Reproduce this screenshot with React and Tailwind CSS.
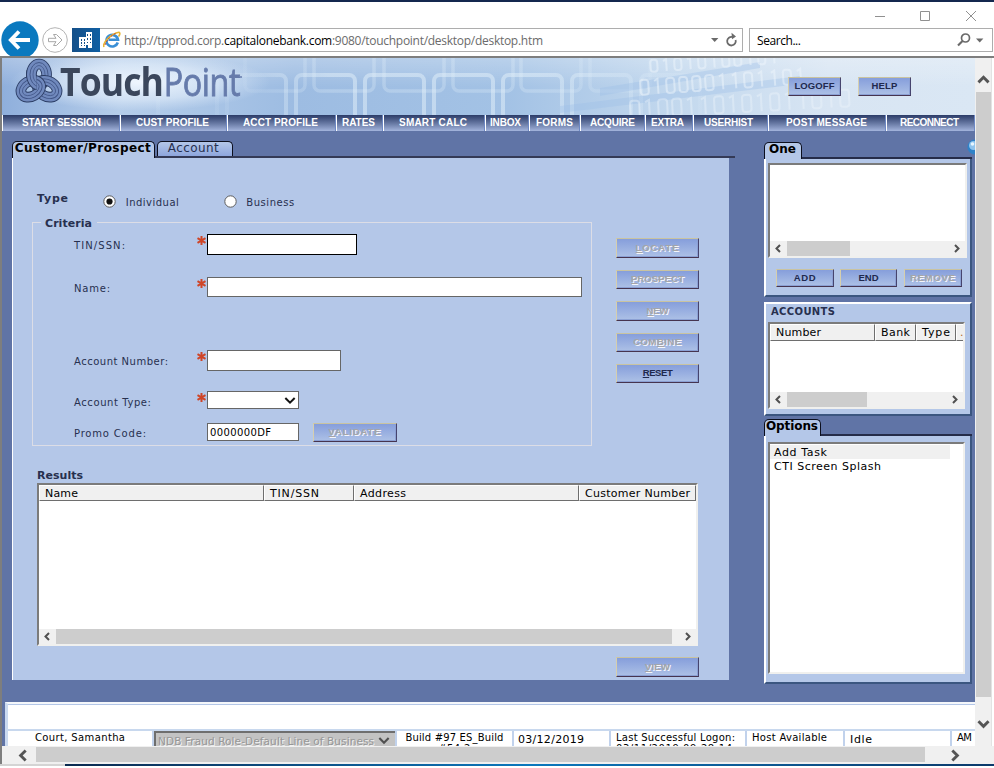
import React, { useLayoutEffect, useRef, useState } from "react";

const VERDANA = "font-['DejaVu_Sans',Verdana,sans-serif]";
const ARIAL = "font-['Liberation_Sans',Arial,sans-serif]";
const SEGOE = "font-['Open_Sans','Noto_Sans',sans-serif]";

// Single line of text whose tracking is adjusted to fill a given width.
function Fit({ w, className = "", children }) {
  const ref = useRef(null);
  const [spacing, setSpacing] = useState(0);
  useLayoutEffect(() => {
    const el = ref.current;
    el.style.letterSpacing = "0px";
    const natural = el.getBoundingClientRect().width;
    const next = (w - natural) / Math.max(1, el.textContent.length - 1);
    el.style.letterSpacing = next + "px";
    setSpacing(next);
  }, [w]);
  return (
    <span
      ref={ref}
      style={{ letterSpacing: spacing }}
      className={"inline-block shrink-0 whitespace-pre " + className}
    >
      {children}
    </span>
  );
}

// Text condensed horizontally to a given width, for the word mark.
function Condensed({ w, className = "", children }) {
  const ref = useRef(null);
  const [box, setBox] = useState({ scale: 1, margin: 0 });
  useLayoutEffect(() => {
    const natural = ref.current.offsetWidth;
    setBox({ scale: w / natural, margin: w - natural });
  }, [w]);
  return (
    <span
      ref={ref}
      style={{ transform: `scaleX(${box.scale})`, marginRight: box.margin }}
      className={"inline-block shrink-0 origin-left whitespace-pre " + className}
    >
      {children}
    </span>
  );
}

function Chevron({ dir, className = "", color = "#505050", size = 9, sw = 2 }) {
  const d = {
    left: "M6 1 L2.5 4.5 L6 8",
    right: "M3 1 L6.5 4.5 L3 8",
    up: "M1 6.5 L4.5 3 L8 6.5",
    down: "M1 3 L4.5 6.5 L8 3",
  }[dir];
  return (
    <svg width={size} height={size} viewBox="0 0 9 9" className={"block shrink-0 " + className}>
      <path d={d} fill="none" stroke={color} strokeWidth={sw} />
    </svg>
  );
}

function Key({ label, hot, w, disabled, className, tone = "text-[#20294e]" }) {
  const i = hot === undefined ? -1 : hot;
  return (
    <button
      className={
        "flex shrink-0 items-center justify-center border border-t-[#c9c3a0] border-l-[#d6cfae] border-r-[#46446e] border-b-[#46344f] bg-linear-to-b from-[#869edb] to-[#adc1e6] shadow-[inset_-1px_-1px_0_#8ba0d4] " +
        ARIAL +
        " pb-px text-[9.5px] leading-none font-bold " +
        (disabled ? "text-[#a5a5a8] [text-shadow:1px_1px_0_#f4f6fb] " : tone + " ") +
        className
      }
    >
      <Fit w={w}>
        {i < 0 ? (
          label
        ) : (
          <>
            {label.slice(0, i)}
            <u className="underline-offset-1">{label[i]}</u>
            {label.slice(i + 1)}
          </>
        )}
      </Fit>
    </button>
  );
}

function HScroll({ thumb }) {
  return (
    <div className="flex h-[15px] w-full shrink-0 items-center bg-[#f0f0f0]">
      <div className="flex w-[17px] justify-center">
        <Chevron dir="left" />
      </div>
      <div className={"h-[15px] bg-[#cdcdcd] " + thumb} />
      <div className="flex-1" />
      <div className="flex w-[17px] justify-center">
        <Chevron dir="right" />
      </div>
    </div>
  );
}

function Loop() {
  return (
    <>
      <ellipse cx="24" cy="16.5" rx="7.6" ry="10.5" stroke="#2b3c63" strokeWidth="10.6" />
      <ellipse cx="24" cy="16.5" rx="7.6" ry="10.5" stroke="#7089bd" strokeWidth="8.8" />
      <ellipse cx="24" cy="16.5" rx="9" ry="12" stroke="#3f5385" strokeWidth="0.9" />
      <ellipse cx="24" cy="16.5" rx="6" ry="9" stroke="#3f5385" strokeWidth="0.7" />
    </>
  );
}

function Knot() {
  return (
    <svg width="48" height="46" viewBox="0 0 48 46" className="block shrink-0" fill="none">
      <defs>
        <clipPath id="leftHalf">
          <rect x="0" y="12" width="21.5" height="26" />
        </clipPath>
      </defs>
      {[0, 120, 240].map((a) => (
        <g key={a} transform={`rotate(${a} 24 26)`}>
          <Loop />
        </g>
      ))}
      <g clipPath="url(#leftHalf)">
        <Loop />
      </g>
    </svg>
  );
}

// Rows of faint ones and zeros drifting across the right of the banner.
const BITS = [
  { x: 650, y: 60, w: 8, h: 12, o: 0.5, r: -4, bits: "01010100101" },
  { x: 640, y: 80, w: 9, h: 15, o: 0.5, r: -4, bits: "0100001101101" },
  { x: 630, y: 101, w: 10, h: 17, o: 0.4, r: -3, bits: "0100110101011010" },
];

function BannerArt() {
  const lower = [156, 225, 294, 363, 432, 501, 570, 639];
  const upper = [245, 314, 384, 453, 521, 590];
  return (
    <svg width="973" height="57" viewBox="2 58 973 57" className="absolute inset-0">
      <defs>
        <linearGradient id="base" x1="0" x2="1">
          <stop offset="0" stopColor="#8fafdc" />
          <stop offset="0.12" stopColor="#b5cdea" />
          <stop offset="0.3" stopColor="#9dbce2" />
          <stop offset="0.52" stopColor="#a3c2e5" />
          <stop offset="0.7" stopColor="#c4d9ee" />
          <stop offset="0.85" stopColor="#d8e5f3" />
          <stop offset="1" stopColor="#dae7f4" />
        </linearGradient>
        <linearGradient id="shine" x1="0" x2="0" y1="0" y2="1">
          <stop offset="0" stopColor="#fff" stopOpacity="0.25" />
          <stop offset="0.5" stopColor="#fff" stopOpacity="0" />
        </linearGradient>
        <radialGradient id="glow">
          <stop offset="0" stopColor="#f2f8ff" stopOpacity="0.95" />
          <stop offset="0.6" stopColor="#e4effb" stopOpacity="0.6" />
          <stop offset="1" stopColor="#dbe8f8" stopOpacity="0" />
        </radialGradient>
        <linearGradient id="fade" gradientUnits="userSpaceOnUse" x1="225" x2="740" y1="0" y2="0">
          <stop offset="0" stopColor="#e4f1fa" stopOpacity="0.1" />
          <stop offset="0.2" stopColor="#e4f1fa" stopOpacity="0.5" />
          <stop offset="0.6" stopColor="#e4f1fa" stopOpacity="0.5" />
          <stop offset="1" stopColor="#e4f1fa" stopOpacity="0" />
        </linearGradient>
      </defs>
      <rect x="2" y="58" width="973" height="57" fill="url(#base)" />
      <rect x="2" y="58" width="973" height="57" fill="url(#shine)" />
      <ellipse cx="140" cy="82" rx="130" ry="29" fill="url(#glow)" />
      <g fill="none" stroke="url(#fade)">
        {upper.map((x) => (
          <rect key={x} x={x} y="40" width="60" height="51" rx="6" strokeWidth="3.5" opacity="0.55" />
        ))}
        {lower.map((x) => (
          <rect key={x} x={x + 2} y="75" width="59" height="60" rx="6" strokeWidth="4" />
        ))}
      </g>
      <g fill="#9dbfe8" opacity="0.35">
        <path d="M600 88 L760 62 L760 68 L600 96 Z" />
        <path d="M560 106 L800 76 L800 84 L560 113 Z" />
      </g>
      {BITS.map((row) => (
        <g
          key={row.y}
          transform={`rotate(${row.r} ${row.x} ${row.y})`}
          fill="none"
          stroke="#eff6fc"
          strokeWidth="2"
          opacity={row.o}
        >
          {row.bits.split("").map((bit, i) => {
            const x = row.x + i * (row.w + 4);
            return bit === "0" ? (
              <rect key={i} x={x} y={row.y} width={row.w - 1} height={row.h} rx="3" />
            ) : (
              <path key={i} d={`M${x + 1} ${row.y + 2} L${x + row.w / 2} ${row.y} V${row.y + row.h}`} />
            );
          })}
        </g>
      ))}
    </svg>
  );
}

const NAV = [
  ["START SESSION", "w-[118px] pl-[19px]", 79],
  ["CUST PROFILE", "w-[107px] pl-[15px]", 73],
  ["ACCT PROFILE", "w-[109px] pl-[15px]", 75],
  ["RATES", "w-[47px] pl-[5px]", 33],
  ["SMART CALC", "w-[102px] pl-[15px]", 68],
  ["INBOX", "w-[44px] pl-[4px]", 31],
  ["FORMS", "w-[51px] pl-[6px]", 37],
  ["ACQUIRE", "w-[65px] pl-[9px]", 45],
  ["EXTRA", "w-[48px] pl-[5px]", 33],
  ["USERHIST", "w-[75px] pl-[10px]", 49],
  ["POST MESSAGE", "w-[118px] pl-[17px]", 81],
  ["RECONNECT", "w-[89px] pl-[13px]", 59],
];

function Nav() {
  return (
    <div className="flex h-4 shrink-0 bg-linear-to-b from-[#2c3c68] to-[#a3b4dc]">
      {NAV.map(([label, cls, w]) => (
        <div
          key={label}
          className={
            "flex shrink-0 items-center border-l border-l-white border-r border-r-[#6d88c4] pb-px text-[10px] leading-none font-bold text-white " +
            ARIAL + " " + cls
          }
        >
          <Fit w={w}>{label}</Fit>
        </div>
      ))}
    </div>
  );
}

function Chrome() {
  return (
    <div className="flex h-[54px] shrink-0 flex-col bg-white">
      <div className="flex h-[26px] shrink-0 items-start justify-end pr-[17px]">
        <svg width="102" height="26" viewBox="0 0 102 26" className="block" fill="none" stroke="#909090">
          <path d="M0 14.5 H10 M45.5 9.5 H54.5 V18.5 H45.5 Z" />
          <path d="M91 9 L101 19 M101 9 L91 19" />
        </svg>
      </div>
      <div className="flex h-6 shrink-0 items-center">
        <div className="relative h-6 w-[72px] shrink-0">
          <svg width="72" height="36" viewBox="0 20 72 36" className="absolute -top-2 left-0">
            <circle cx="20" cy="40" r="18.7" fill="#0a79bf" />
            <path d="M30 40 H12 M19 31.5 L10.8 40 L19 48.5" fill="none" stroke="#fff" strokeWidth="3.8" />
            <circle cx="55" cy="40" r="12.3" fill="#fff" stroke="#b4b4b4" />
            <path d="M48.5 38.3 H56 L53.5 34.5 H56.5 L62 40 L56.5 45.5 H53.5 L56 41.7 H48.5 Z" fill="none" stroke="#a8a8a8" />
          </svg>
        </div>
        <div className="flex h-6 w-[671px] shrink-0 items-center border-y border-r border-[#adadad]">
          <div className="-my-px flex h-6 w-7 shrink-0 items-center justify-center bg-linear-to-r from-[#155089] to-[#0f5fa3]">
            <svg width="14" height="16" viewBox="0 0 14 16" fill="#fff" shapeRendering="crispEdges">
              <path d="M7 0 H13 V16 H9 V13 H7 V16 H0 V5 H7 Z" />
              <path d="M8 2h1v2H8zM11 2h1v2h-1zM8 6h1v2H8zM11 6h1v2h-1zM2 7h1v2H2zM5 7h1v2H5zM2 10h1v2H2zM5 10h1v2H5zM8 10h1v1H8zM11 10h1v1h-1zM2 13h1v1H2zM5 13h1v1H5z" fill="#155089" />
            </svg>
          </div>
          <svg width="18" height="18" viewBox="0 0 18 18" className="ml-[3px] shrink-0">
            <path d="M14.8 11.5 A5.8 5.8 0 1 1 15 8.8 H5.5" fill="none" stroke="#3a8fd6" strokeWidth="2.6" />
            <path d="M1 16 C-1 12 8 2.5 16 1.2 C17.6 1.8 16.5 4.5 15.5 5.5" fill="none" stroke="#e8b532" strokeWidth="1.6" />
            <path d="M2 14 C3 10 8 4 13.5 2" fill="none" stroke="#c23b2a" strokeWidth="0.9" strokeDasharray="2 1.5" />
          </svg>
          <Fit w={419} className={"ml-[3px] pt-px text-[12px] leading-none text-[#6b6b6b] " + SEGOE}>
            http://tpprod.corp.<span className="text-black">capitalonebank.com</span>:9080/touchpoint/desktop/desktop.htm
          </Fit>
          <div className="flex-1" />
          <svg width="28" height="16" viewBox="0 0 28 16" className="mr-[4px] shrink-0">
            <path d="M1 6 H8.4 L4.7 10 Z" fill="#6a6a6a" />
            <path d="M25.6 7 A4.3 4.3 0 1 1 22.5 4" fill="none" stroke="#6a6a6a" strokeWidth="1.8" transform="translate(0 1)" />
            <path d="M21.5 0.8 L26 4.5 L22 7.3 Z" fill="#6a6a6a" />
          </svg>
        </div>
        <div className="ml-[6px] flex h-6 w-[244px] shrink-0 items-center border border-[#adadad]">
          <Fit w={44} className={"ml-[7px] pt-px text-[12px] leading-none text-black " + SEGOE}>Search...</Fit>
          <div className="flex-1" />
          <svg width="27" height="14" viewBox="0 0 27 14" className="mr-2 shrink-0">
            <circle cx="8.5" cy="5" r="4" fill="none" stroke="#6a6a6a" strokeWidth="1.7" />
            <path d="M5.5 8 L1 12.5" stroke="#6a6a6a" strokeWidth="2.2" />
            <path d="M19 5.5 H26.4 L22.7 9.5 Z" fill="#6a6a6a" />
          </svg>
        </div>
      </div>
    </div>
  );
}

function Row({ label, w, star, children, drop = "pt-[2px]", className }) {
  return (
    <div className={"flex shrink-0 items-center " + className}>
      <div className={"w-[123px] shrink-0 text-[10px] leading-none text-[#27304f] " + drop + " " + VERDANA}>
        <Fit w={w}>{label}</Fit>
      </div>
      <div className="flex w-[10px] shrink-0 justify-start self-start pt-[2px]">
        {star && (
          <svg width="9" height="9" viewBox="0 0 9 9">
            <path d="M4.5 0 V9 M0.5 2.2 L8.5 6.8 M8.5 2.2 L0.5 6.8" stroke="#cf4527" strokeWidth="2" />
          </svg>
        )}
      </div>
      {children}
    </div>
  );
}

function HeadCell({ children, w, className, pad = "pl-[5px]" }) {
  return (
    <div
      className={
        "flex shrink-0 items-center overflow-hidden border-t border-l border-r border-b border-t-white border-l-white border-r-[#6e6e6e] border-b-[#6e6e6e] bg-[#f0f0f0] text-[11px] leading-none text-black " +
        VERDANA + " " + pad + " " + className
      }
    >
      <Fit w={w}>{children}</Fit>
    </div>
  );
}

const SUNKEN = "border-2 border-t-[#7b7b7b] border-l-[#7b7b7b] border-r-[#f0f0ee] border-b-[#f0f0ee] bg-white";
const RAISED = "border-l-2 border-r-2 border-b-2 border-t-white border-l-white border-r-[#3b5680] border-b-[#3b5680] bg-[#b4c7e8]";

function MainPanel() {
  return (
    <div className="flex w-[723px] shrink-0 flex-col pt-[10px]">
      <div className="flex h-[17px] shrink-0">
        <div className={"flex w-[143px] shrink-0 justify-center rounded-t-[5px] border border-b-0 border-[#0c0f1e] bg-[#b4c7e8] pr-px text-[12px] leading-[13px] font-bold text-black " + VERDANA}>
          <Fit w={136}>Customer/Prospect</Fit>
        </div>
        <div className="flex flex-1 items-end border-b-2 border-[#343a56] pl-[2px]">
          <div className={"flex h-[15px] w-[76px] justify-center rounded-t-[5px] border border-b-0 border-[#0c0f1e] bg-linear-to-b from-[#b4c7e8] to-[#8ea6dd] pr-[3px] text-[12px] leading-[13px] text-[#27304f] " + VERDANA}>
            <Fit w={51}>Account</Fit>
          </div>
        </div>
      </div>
      <div className="flex h-[522px] w-[717px] shrink-0 flex-col border-l border-white bg-[#b4c7e8]">
        <div className={"flex h-16 shrink-0 items-start pl-6 text-[#27304f] " + VERDANA}>
          <Fit w={31} className="mt-[35px] text-[11px] leading-none font-bold">Type</Fit>
          <svg width="13" height="13" viewBox="0 0 13 13" className="mt-[37px] ml-[34px] shrink-0">
            <circle cx="6.5" cy="6.5" r="5.7" fill="#fff" stroke="#5c5c5c" />
            <circle cx="6.5" cy="6.5" r="3.1" fill="#111" />
          </svg>
          <Fit w={53} className="mt-[40px] ml-[10px] text-[10px] leading-none">Individual</Fit>
          <svg width="13" height="13" viewBox="0 0 13 13" className="mt-[37px] ml-[45px] shrink-0">
            <circle cx="6.5" cy="6.5" r="5.7" fill="#fff" stroke="#5c5c5c" />
          </svg>
          <Fit w={48} className="mt-[40px] ml-[9px] text-[10px] leading-none">Business</Fit>
        </div>
        <div className="flex h-[245px] shrink-0 pl-[19px]">
          <div className="flex h-[224px] w-[560px] shrink-0 flex-col border border-[#dcdde6] pl-[41px]">
            <div className={"-mt-[6px] -ml-[33px] h-[12px] w-[56px] shrink-0 bg-[#b4c7e8] pl-1 text-[11px] leading-[13px] font-bold text-[#27304f] " + VERDANA}>
              <Fit w={47}>Criteria</Fit>
            </div>
            <Row label="TIN/SSN:" w={51} star className="mt-[5px] h-[21px]">
              <div className="h-[21px] w-[150px] border border-black bg-white" />
            </Row>
            <Row label="Name:" w={36} star drop="pt-1" className="mt-[22px] h-5">
              <div className="h-5 w-[375px] border border-[#666] bg-white" />
            </Row>
            <Row label="Account Number:" w={94} star className="mt-[53px] h-[21px]">
              <div className="h-[21px] w-[134px] border border-[#666] bg-white" />
            </Row>
            <Row label="Account Type:" w={77} star drop="pt-[6px]" className="mt-5 h-[18px]">
              <div className="flex h-[18px] w-[92px] items-center justify-end border border-[#666] bg-white pr-[2px] pb-px">
                <Chevron dir="down" size={12} color="#111" sw={1.5} />
              </div>
            </Row>
            <Row label="Promo Code:" w={72} drop="pt-[4px]" className="mt-[14px] h-[18px]">
              <div className={"flex h-[18px] w-[92px] items-center border border-[#666] bg-white pt-[2px] pl-[2px] text-[10px] leading-none text-black " + VERDANA}>
                <Fit w={61}>0000000DF</Fit>
              </div>
              <Key label="VALIDATE" hot={0} w={52} disabled className="ml-[14px] h-[19px] w-[84px]" />
            </Row>
          </div>
          <div className="flex flex-col pt-4 pl-[24px]">
            <Key label="LOCATE" hot={0} w={43} disabled className="h-5 w-[83px]" />
            <Key label="PROSPECT" hot={0} w={53} disabled className="mt-3 h-[19px] w-[83px]" />
            <Key label="NEW" hot={0} w={22} disabled className="mt-3 h-5 w-[83px]" />
            <Key label="COMBINE" hot={3} w={48} disabled className="mt-3 h-[19px] w-[83px]" />
            <Key label="RESET" hot={0} w={30} className="mt-3 h-[19px] w-[83px]" />
          </div>
        </div>
        <div className="flex h-[213px] shrink-0 flex-col pl-6">
          <div className={"h-4 shrink-0 pt-[3px] text-[11px] leading-none font-bold text-[#27304f] " + VERDANA}>
            <Fit w={46}>Results</Fit>
          </div>
          <div className={"flex h-[163px] w-[661px] shrink-0 flex-col " + SUNKEN}>
            <div className="flex h-[16px] shrink-0">
              <HeadCell w={33} className="w-[225px]">Name</HeadCell>
              <HeadCell w={49} className="w-[90px]">TIN/SSN</HeadCell>
              <HeadCell w={46} className="w-[225px]">Address</HeadCell>
              <HeadCell w={105} className="w-[117px]">Customer Number</HeadCell>
            </div>
            <div className="flex-1" />
            <HScroll thumb="w-[616px]" />
          </div>
          <div className="pt-[11px] pl-[579px]">
            <Key label="VIEW" hot={0} w={25} disabled className="h-5 w-[83px]" />
          </div>
        </div>
      </div>
    </div>
  );
}

function SideTab({ label, w, className }) {
  return (
    <div className="flex h-[17px] shrink-0">
      <div className={"flex shrink-0 rounded-t-[5px] border border-b-0 border-[#0c0f1e] bg-[#b4c7e8] text-[12px] leading-[13px] font-bold text-black " + VERDANA + " " + className}>
        <Fit w={w}>{label}</Fit>
      </div>
      <div className="flex-1 border-b-2 border-[#252c49]" />
    </div>
  );
}

function Side() {
  return (
    <div className="flex w-[208px] shrink-0 flex-col pt-[11px]">
      <SideTab label="One" w={27} className="w-[38px] pl-1" />
      <div className={"flex h-[138px] shrink-0 flex-col pt-1 pl-[2px] " + RAISED}>
        <div className={"flex h-[95px] w-[199px] shrink-0 flex-col " + SUNKEN}>
          <div className="flex-1" />
          <HScroll thumb="w-[63px]" />
        </div>
        <div className="flex pt-[11px] pl-2">
          <Key label="ADD" w={22} className="h-[18px] w-[58px]" />
          <Key label="END" w={20} className="ml-[6px] h-[18px] w-[57px]" />
          <Key label="REMOVE" w={45} disabled className="ml-[7px] h-[18px] w-[58px]" />
        </div>
      </div>
      <div className={"mt-[5px] flex h-[114px] shrink-0 flex-col border-t-2 pl-[2px] " + RAISED}>
        <div className={"h-[18px] shrink-0 pt-[3px] pl-[3px] text-[10px] leading-none font-bold text-[#27304f] " + VERDANA}>
          <Fit w={64}>ACCOUNTS</Fit>
        </div>
        <div className={"flex h-[87px] w-[197px] shrink-0 flex-col " + SUNKEN}>
          <div className="flex h-[17px] shrink-0 overflow-hidden">
            <HeadCell w={45} className="w-[105px]">Number</HeadCell>
            <HeadCell w={29} className="w-[41px]">Bank</HeadCell>
            <HeadCell w={28} className="w-[40px]">Type</HeadCell>
            <HeadCell w={4} pad="pl-[3px]" className="w-[12px] text-[#b06a30]!">.</HeadCell>
          </div>
          <div className="flex-1" />
          <HScroll thumb="w-[80px]" />
        </div>
      </div>
      <div className="h-[3px] shrink-0" />
      <SideTab label="Options" w={52} className="w-[57px] pl-px" />
      <div className={"flex h-[248px] shrink-0 flex-col pt-[6px] pl-[2px] " + RAISED}>
        <div className={"flex h-[232px] w-[197px] shrink-0 flex-col pt-[2px] text-[11px] leading-[14px] text-black " + SUNKEN + " " + VERDANA}>
          <div className="-mt-px h-[14px] w-[180px] shrink-0 bg-[#f0f0f0] pt-px pl-1">
            <Fit w={53}>Add Task</Fit>
          </div>
          <div className="h-[14px] shrink-0 pt-px pl-1">
            <Fit w={107}>CTI Screen Splash</Fit>
          </div>
        </div>
      </div>
    </div>
  );
}

function StatusBar() {
  const cell = "flex shrink-0 border-r-2 border-[#c1d2ec] text-[10px] leading-[13px] text-black overflow-hidden ";
  return (
    <div className={"flex h-[44px] shrink-0 flex-col bg-[#6074a6] pl-[3px] " + VERDANA}>
      <div className="flex flex-1 flex-col border-t-2 border-l-[3px] border-t-[#f4f7fb] border-l-[#cbdaf0] bg-white">
        <div className="h-[27px] shrink-0 border-t border-b-2 border-t-[#b4c7e8] border-b-[#c8d8ee]" />
        <div className="flex h-[15px] overflow-hidden">
          <div className={cell + "w-[146px] pl-[27px]"}>
            <Fit w={90}>Court, Samantha</Fit>
          </div>
          <div className="flex w-[241px] shrink-0 items-start border-t-2 border-l-2 border-[#6e6e6e] bg-[#c3c3c3]">
            <Fit w={218} className="pl-[2px] text-[10.5px] leading-[17px] text-[#979797] [text-shadow:1px_1px_0_#f2f2f2]">
              NDB Fraud Role-Default Line of Business
            </Fit>
            <Chevron dir="down" size={12} className="mt-[1px] ml-[4px]" sw={1.6} />
          </div>
          <div className={cell + "w-[119px] flex-col items-center border-l-2"}>
            <Fit w={98}>Build #97 ES_Build</Fit>
            <Fit w={32} className="leading-[10px]">#54.2</Fit>
          </div>
          <div className={cell + "w-[97px] pl-[4px] text-[11px]! leading-[18px]!"}>
            <Fit w={66}>03/12/2019</Fit>
          </div>
          <div className={cell + "w-[136px] flex-col pl-[5px]"}>
            <Fit w={119} className="self-start">Last Successful Logon:</Fit>
            <Fit w={116} className="self-start leading-[10px]">03/11/2019 09:28:14</Fit>
          </div>
          <div className={cell + "w-[98px] pl-[5px]"}>
            <Fit w={75}>Host Available</Fit>
          </div>
          <div className={cell + "w-[107px] pl-[5px] text-[11px]! leading-[18px]!"}>
            <Fit w={22}>Idle</Fit>
          </div>
          <div className="flex pl-[5px] text-[10px] leading-[13px] text-black">
            <Fit w={15}>AM</Fit>
          </div>
        </div>
      </div>
    </div>
  );
}

export default function App() {
  return (
    <div className="flex h-[768px] w-[994px] flex-col overflow-hidden bg-white">
      <div className="h-[2px] shrink-0 bg-[#14284f]" />
      <Chrome />
      <div className="flex h-[708px] shrink-0 flex-col border-t-2 border-l-2 border-[#7e7e7e]">
        <div className="flex h-[688px] shrink-0">
          <div className="flex w-[973px] shrink-0 flex-col overflow-hidden">
            <div className="relative flex h-[57px] shrink-0">
              <BannerArt />
              <div className="relative flex w-full items-start pl-[13px]">
                <Knot />
                <div className={"-ml-[3px] flex text-[39px] leading-[46px] " + SEGOE}>
                  <Condensed w={103} className="font-bold tracking-[-1px] text-[#3b475c]">Touch</Condensed>
                  <Condensed w={77} className="pl-px tracking-[-0.5px] text-[#667bab] [-webkit-text-stroke:0.9px_#667bab]">Point</Condensed>
                </div>
                <div className="mt-[18px] h-[2px] w-[2px] shrink-0 rounded-full bg-[#667bab]" />
                <div className="flex-1" />
                <div className="flex gap-[17px] pt-[19px] pr-[64px]">
                  <Key label="LOGOFF" w={40} className="h-[19px] w-[53px]" />
                  <Key label="HELP" w={26} className="h-[19px] w-[53px]" />
                </div>
              </div>
            </div>
            <Nav />
            <div className="relative flex h-[571px] shrink-0 overflow-hidden bg-[#6074a6] pl-[10px]">
              <MainPanel />
              <div className="w-[29px] shrink-0" />
              <Side />
              <svg width="16" height="16" viewBox="0 0 16 16" className="absolute top-2 -right-2">
                <circle cx="8" cy="8" r="7.6" fill="#2f82c8" />
                <circle cx="6.5" cy="6.5" r="4.5" fill="#8fc4ee" />
                <circle cx="5.5" cy="5" r="1.8" fill="#e6f5ff" />
              </svg>
            </div>
            <StatusBar />
          </div>
          <div className="flex w-[16px] shrink-0 flex-col items-center bg-[#f0f0f0]">
            <Chevron dir="up" size={13} className="mt-[15px]" color="#555" />
            <div className="mt-[6px] h-[605px] w-[15px] shrink-0 bg-[#cdcdcd]" />
            <Chevron dir="down" size={13} className="mt-[20px]" color="#555" />
          </div>
          <div className="flex-1 border-l border-[#e3e3e3] bg-white" />
        </div>
        <div className="flex h-[18px] shrink-0 bg-[#f0f0f0]">
          <div className="flex w-[34px] shrink-0 items-center justify-center pl-[8px]">
            <Chevron dir="left" size={13} color="#555" />
          </div>
          <div className="mt-px h-[15px] w-[889px] bg-[#cdcdcd]" />
          <div className="flex w-[58px] items-center justify-center">
            <Chevron dir="right" size={13} color="#555" />
          </div>
        </div>
      </div>
      <div className="flex h-[2px] shrink-0">
        <div className="w-[65px] bg-[#d4d4d4]" />
        <div className="flex-1 bg-linear-to-r from-[#0a2a50] via-[#0a78bd] to-[#0b3a6b]" />
      </div>
    </div>
  );
}
